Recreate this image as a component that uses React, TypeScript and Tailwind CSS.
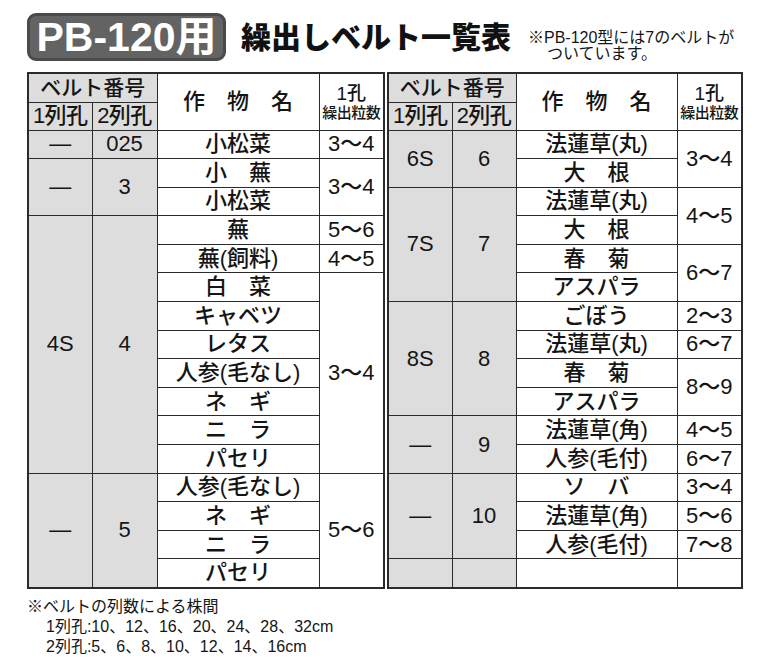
type Cell = { t: string; span?: number };
type Row = { b1?: Cell; b2?: Cell; crop: string; g?: Cell };

const leftRows: Row[] = [
  { b1: { t: "—" }, b2: { t: "025" }, crop: "小松菜", g: { t: "3〜4" } },
  { b1: { t: "—", span: 2 }, b2: { t: "3", span: 2 }, crop: "小　蕪", g: { t: "3〜4", span: 2 } },
  { crop: "小松菜" },
  { b1: { t: "4S", span: 9 }, b2: { t: "4", span: 9 }, crop: "蕪", g: { t: "5〜6" } },
  { crop: "蕪(飼料)", g: { t: "4〜5" } },
  { crop: "白　菜", g: { t: "3〜4", span: 7 } },
  { crop: "キャベツ" },
  { crop: "レタス" },
  { crop: "人参(毛なし)" },
  { crop: "ネ　ギ" },
  { crop: "ニ　ラ" },
  { crop: "パセリ" },
  { b1: { t: "—", span: 4 }, b2: { t: "5", span: 4 }, crop: "人参(毛なし)", g: { t: "5〜6", span: 4 } },
  { crop: "ネ　ギ" },
  { crop: "ニ　ラ" },
  { crop: "パセリ" },
];

const rightRows: Row[] = [
  { b1: { t: "6S", span: 2 }, b2: { t: "6", span: 2 }, crop: "法蓮草(丸)", g: { t: "3〜4", span: 2 } },
  { crop: "大　根" },
  { b1: { t: "7S", span: 4 }, b2: { t: "7", span: 4 }, crop: "法蓮草(丸)", g: { t: "4〜5", span: 2 } },
  { crop: "大　根" },
  { crop: "春　菊", g: { t: "6〜7", span: 2 } },
  { crop: "アスパラ" },
  { b1: { t: "8S", span: 4 }, b2: { t: "8", span: 4 }, crop: "ごぼう", g: { t: "2〜3" } },
  { crop: "法蓮草(丸)", g: { t: "6〜7" } },
  { crop: "春　菊", g: { t: "8〜9", span: 2 } },
  { crop: "アスパラ" },
  { b1: { t: "—", span: 2 }, b2: { t: "9", span: 2 }, crop: "法蓮草(角)", g: { t: "4〜5" } },
  { crop: "人参(毛付)", g: { t: "6〜7" } },
  { b1: { t: "—", span: 3 }, b2: { t: "10", span: 3 }, crop: "ソ　バ", g: { t: "3〜4" } },
  { crop: "法蓮草(角)", g: { t: "5〜6" } },
  { crop: "人参(毛付)", g: { t: "7〜8" } },
  { b1: { t: "" }, b2: { t: "" }, crop: "", g: { t: "" } },
];

const cell = "border border-[#2b2b2b] p-0 text-center align-middle leading-none";

function BeltTable({ rows, widths }: { rows: Row[]; widths: number[] }) {
  const total = widths.reduce((a, b) => a + b, 0);
  return (
    <table
      className="table-fixed border-collapse border-2 border-[#2b2b2b] text-[22px] font-medium text-[#151515]"
      style={{ width: total }}
    >
      <colgroup>
        {widths.map((w, i) => (
          <col key={i} style={{ width: w }} />
        ))}
      </colgroup>
      <thead>
        <tr className="h-[29px]">
          <th colSpan={2} className={`${cell} bg-[#dddddd] text-[21px] font-medium`}>
            ベルト番号
          </th>
          <th rowSpan={2} className={`${cell} font-medium`}>
            作　物　名
          </th>
          <th rowSpan={2} className={`${cell} font-medium`}>
            <div className="text-[19px] leading-[21px]">1孔</div>
            <div className="text-[15px] leading-[17px] tracking-[-0.5px]">繰出粒数</div>
          </th>
        </tr>
        <tr className="h-[28px]">
          <th className={`${cell} bg-[#dddddd] text-[22px] font-medium tracking-[-0.5px]`}>1列孔</th>
          <th className={`${cell} bg-[#dddddd] text-[22px] font-medium tracking-[-0.5px]`}>2列孔</th>
        </tr>
      </thead>
      <tbody>
        {rows.map((r, i) => (
          <tr key={i} className="h-[28.6px]">
            {r.b1 && (
              <td rowSpan={r.b1.span} className={`${cell} bg-[#dddddd]`}>
                {r.b1.t}
              </td>
            )}
            {r.b2 && (
              <td rowSpan={r.b2.span} className={`${cell} bg-[#dddddd]`}>
                {r.b2.t}
              </td>
            )}
            <td className={cell}>{r.crop}</td>
            {r.g && (
              <td rowSpan={r.g.span} className={cell}>
                {r.g.t}
              </td>
            )}
          </tr>
        ))}
      </tbody>
    </table>
  );
}

export default function App() {
  return (
    <div className="w-[760px] h-[664px] bg-white font-['Liberation_Sans','Noto_Sans_CJK_JP',sans-serif] text-[#151515]">
      <div className="flex items-start pl-[27px] pt-[13px]">
        <div className="flex h-[48px] w-[199px] items-center justify-center rounded-[9px] border-[3px] border-[#4a4a4a] bg-[#636363] text-[41px] font-bold leading-none text-white">
          PB-120用
        </div>
        <div className="ml-[15px] mt-[7px] font-['Noto_Sans_CJK_JP',sans-serif] text-[30px] font-black leading-none text-[#111]">
          繰出しベルト一覧表
        </div>
        <div className="ml-[17px] mt-[17px] text-[16px] leading-[16px]">
          <div>※PB-120型には7のベルトが</div>
          <div className="pl-[19px]">ついています。</div>
        </div>
      </div>

      <div className="mt-[10px] flex gap-[2px] pl-[27px]">
        <BeltTable rows={leftRows} widths={[64, 65, 162, 65]} />
        <BeltTable rows={rightRows} widths={[64, 64, 161, 65]} />
      </div>

      <div className="mt-[8px] pl-[27px] text-[16px] leading-[20px]">
        <div>※ベルトの列数による株間</div>
        <div className="pl-[19px]">1列孔:10、12、16、20、24、28、32cm</div>
        <div className="pl-[19px]">2列孔:5、6、8、10、12、14、16cm</div>
      </div>
    </div>
  );
}
